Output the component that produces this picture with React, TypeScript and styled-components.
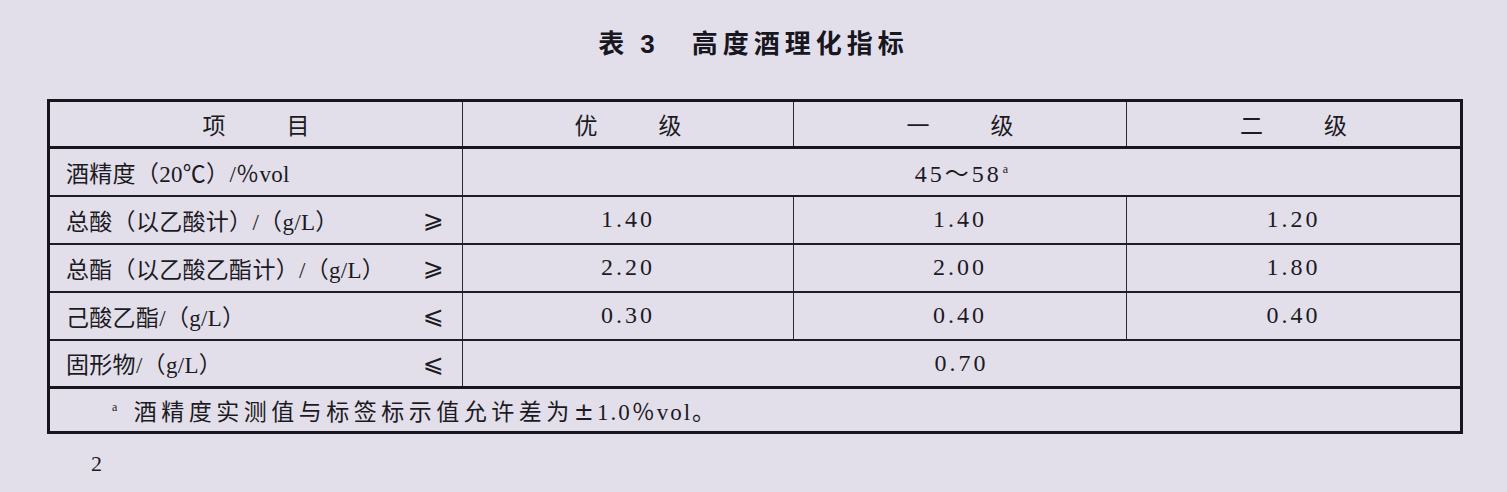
import React from "react";
import styled, { createGlobalStyle } from "styled-components";

const GlobalStyle = createGlobalStyle`
  html, body {
    margin: 0;
    padding: 0;
    background: #e2dfeb;
  }
  body {
    font-family: "Liberation Serif", "Noto Sans CJK SC", serif;
    color: #1c1a22;
  }
`;

type Row = {
  label: string;
  sign?: string;
  values: string[];
  span?: boolean;
  sup?: string;
};

const rows: Row[] = [
  { label: "酒精度（20℃）/％vol", values: ["45～58"], span: true, sup: "a" },
  { label: "总酸（以乙酸计）/（g/L）", sign: "⩾", values: ["1.40", "1.40", "1.20"] },
  { label: "总酯（以乙酸乙酯计）/（g/L）", sign: "⩾", values: ["2.20", "2.00", "1.80"] },
  { label: "己酸乙酯/（g/L）", sign: "⩽", values: ["0.30", "0.40", "0.40"] },
  { label: "固形物/（g/L）", sign: "⩽", values: ["0.70"], span: true },
];

export default function App() {
  return (
    <Page>
      <GlobalStyle />
      <Title>
        表<TitleNum>3</TitleNum>高度酒理化指标
      </Title>
      <Table>
        <colgroup>
          <col style={{ width: 414 }} />
          <col style={{ width: 331 }} />
          <col style={{ width: 333 }} />
          <col style={{ width: 335 }} />
        </colgroup>
        <tbody>
          <HeadRow>
            <HeadCell>项　　目</HeadCell>
            <HeadCell>优　　级</HeadCell>
            <HeadCell>一　　级</HeadCell>
            <HeadCell>二　　级</HeadCell>
          </HeadRow>
          {rows.map((r) => (
            <BodyRow key={r.label}>
              <LabelCell>
                <LabelInner>
                  <Label>{r.label}</Label>
                  {r.sign && <Sign>{r.sign}</Sign>}
                </LabelInner>
              </LabelCell>
              {r.span ? (
                <ValueCell colSpan={3}>
                  {r.values[0]}
                  {r.sup && <Sup>{r.sup}</Sup>}
                </ValueCell>
              ) : (
                r.values.map((v, i) => <ValueCell key={i}>{v}</ValueCell>)
              )}
            </BodyRow>
          ))}
          <NoteRow>
            <NoteCell colSpan={4}>
              <NoteSup>a</NoteSup>酒精度实测值与标签标示值允许差为
              <PlusMinus>±</PlusMinus>
              <NoteTail>1.0％vol。</NoteTail>
            </NoteCell>
          </NoteRow>
        </tbody>
      </Table>
      <PageNum>2</PageNum>
    </Page>
  );
}

const Page = styled.div`
  width: 1507px;
  height: 492px;
  box-sizing: border-box;
  padding: 25px 0 0 47px;
  overflow: hidden;
`;

const Title = styled.div`
  width: 1413px;
  text-align: center;
  font-family: "Noto Sans CJK SC", sans-serif;
  font-weight: 700;
  font-size: 26px;
  letter-spacing: 5px;
  line-height: 34px;
  margin-bottom: 38px;
  color: #18161e;
`;

const TitleNum = styled.span`
  font-family: "Liberation Sans", sans-serif;
  font-weight: 700;
  margin: 0 32px 0 11px;
`;

const Table = styled.table`
  width: 1413px;
  table-layout: fixed;
  border-collapse: collapse;
  border: 3px solid #17161d;
`;

const HeadRow = styled.tr`
  height: 47px;
  border-bottom: 3px solid #17161d;
`;

const HeadCell = styled.td`
  border-left: 1.5px solid #2a2830;
  text-align: center;
  font-family: "Noto Sans CJK SC", sans-serif;
  font-size: 23px;
  letter-spacing: 5px;
  padding: 0 0 0 5px;
  &:first-child {
    border-left: none;
  }
`;

const BodyRow = styled.tr`
  height: 48px;
  border-bottom: 2px solid #1e1c24;
`;

const LabelCell = styled.td`
  padding: 0 16px 0 16px;
`;

const LabelInner = styled.div`
  display: flex;
  justify-content: space-between;
  align-items: center;
`;

const Label = styled.span`
  font-family: "Liberation Serif", "Noto Sans CJK SC", serif;
  font-size: 23px;
  letter-spacing: 0.3px;
`;

const Sign = styled.span`
  font-family: "DejaVu Sans", sans-serif;
  font-size: 25px;
  margin-right: 2px;
`;

const ValueCell = styled.td`
  border-left: 1px solid #2a2830;
  text-align: center;
  font-family: "Liberation Serif", "Noto Sans CJK SC", serif;
  font-size: 24px;
  letter-spacing: 3px;
  padding: 0;
`;

const Sup = styled.sup`
  font-size: 12px;
  letter-spacing: 0;
  margin-left: 1px;
  vertical-align: 9px;
`;

const NoteRow = styled.tr`
  height: 45px;
  border-top: 3px solid #17161d;
`;

const NoteCell = styled.td`
  padding: 0 0 0 62px;
  font-family: "Liberation Serif", "Noto Sans CJK SC", serif;
  font-size: 23px;
  letter-spacing: 4.5px;
`;

const PlusMinus = styled.span`
  font-family: "DejaVu Sans", sans-serif;
  font-size: 24px;
  letter-spacing: 3px;
`;

const NoteTail = styled.span`
  letter-spacing: 2px;
`;

const NoteSup = styled.sup`
  font-size: 12px;
  margin-right: 12px;
  vertical-align: 9px;
`;

const PageNum = styled.div`
  margin: 17px 0 0 44px;
  font-family: "Liberation Serif", serif;
  font-size: 22px;
`;
